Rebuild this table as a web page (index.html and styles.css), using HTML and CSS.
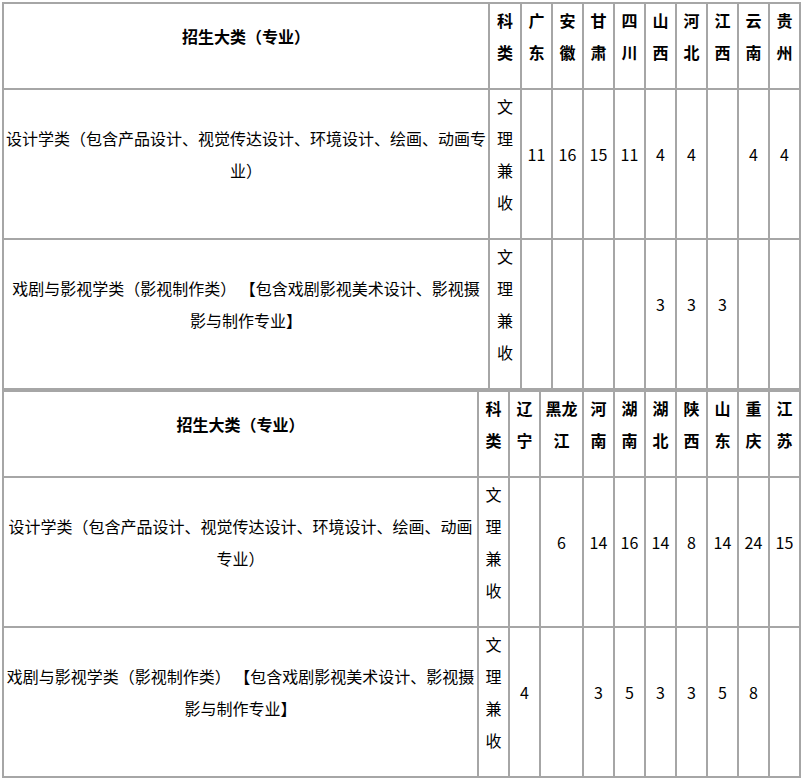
FILE: index.html
```html
<!DOCTYPE html>
<html lang="zh-CN">
<head>
<meta charset="utf-8">
<title>招生计划</title>
<link rel="stylesheet" href="styles.css">
</head>
<body>
<div class="sheet">
  <table class="grid t1">
    <tr>
      <td class="hd major">招生大类（专业）</td>
      <td class="hd kind">科类</td>
      <td class="hd prov">广东</td>
      <td class="hd prov">安徽</td>
      <td class="hd prov">甘肃</td>
      <td class="hd prov">四川</td>
      <td class="hd prov">山西</td>
      <td class="hd prov">河北</td>
      <td class="hd prov">江西</td>
      <td class="hd prov">云南</td>
      <td class="hd prov">贵州</td>
    </tr>
    <tr>
      <td>设计学类（包含产品设计、视觉传达设计、环境设计、绘画、动画专业）</td>
      <td>文理兼收</td>
      <td>11</td>
      <td>16</td>
      <td>15</td>
      <td>11</td>
      <td>4</td>
      <td>4</td>
      <td></td>
      <td>4</td>
      <td>4</td>
    </tr>
    <tr>
      <td>戏剧与影视学类（影视制作类） 【包含戏剧影视美术设计、影视摄影与制作专业】</td>
      <td>文理兼收</td>
      <td></td>
      <td></td>
      <td></td>
      <td></td>
      <td>3</td>
      <td>3</td>
      <td>3</td>
      <td></td>
      <td></td>
    </tr>
  </table>
  <table class="grid t2">
    <tr>
      <td class="hd major">招生大类（专业）</td>
      <td class="hd kind">科类</td>
      <td class="hd prov">辽宁</td>
      <td class="hd prov wide">黑龙江</td>
      <td class="hd prov">河南</td>
      <td class="hd prov">湖南</td>
      <td class="hd prov">湖北</td>
      <td class="hd prov">陕西</td>
      <td class="hd prov">山东</td>
      <td class="hd prov">重庆</td>
      <td class="hd prov">江苏</td>
    </tr>
    <tr>
      <td>设计学类（包含产品设计、视觉传达设计、环境设计、绘画、动画专业）</td>
      <td>文理兼收</td>
      <td></td>
      <td>6</td>
      <td>14</td>
      <td>16</td>
      <td>14</td>
      <td>8</td>
      <td>14</td>
      <td>24</td>
      <td>15</td>
    </tr>
    <tr>
      <td>戏剧与影视学类（影视制作类） 【包含戏剧影视美术设计、影视摄影与制作专业】</td>
      <td>文理兼收</td>
      <td>4</td>
      <td></td>
      <td>3</td>
      <td>5</td>
      <td>3</td>
      <td>3</td>
      <td>5</td>
      <td>8</td>
      <td></td>
    </tr>
  </table>
</div>
</body>
</html>
```
FILE: styles.css
```css
html, body {
  margin: 0;
  background: #fff;
}
body {
  font-family: "Noto Sans CJK SC", "Noto Sans", sans-serif;
  font-size: 16px;
  color: #000;
}
.sheet {
  padding: 2px 0 0 2px;
}
.grid {
  border-collapse: separate;
  border-spacing: 0;
  border: 1px solid #a6a6a6;
  table-layout: fixed;
  width: 799px;
}
.grid td {
  box-sizing: border-box;
  border: 1px solid #a6a6a6;
  padding: 0 1px 20px;
  line-height: 32px;
  text-align: center;
  vertical-align: middle;
  word-break: break-all;
  text-spacing-trim: space-all;
}
.grid td.hd {
  font-weight: bold;
}
.t1 .major { width: 486px; }
.t1 .kind { width: 32px; }
.t2 .major { width: 475px; }
.t2 .kind { width: 31px; }
.prov { width: 31px; }
.t2 .wide { width: 43px; }
```
